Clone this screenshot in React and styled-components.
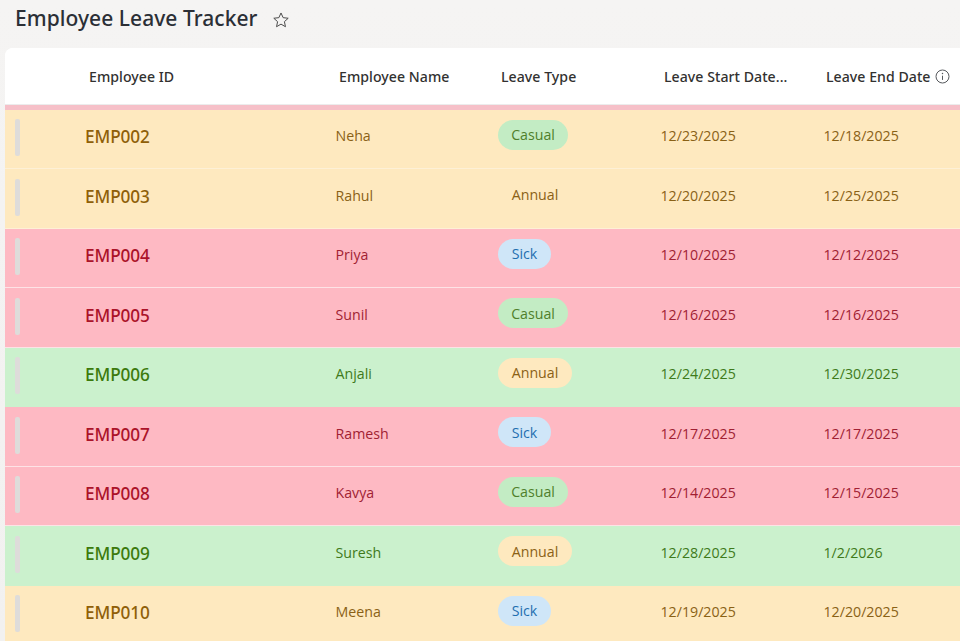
import React from "react";
import styled, { createGlobalStyle } from "styled-components";

const Global = createGlobalStyle`
  html, body { margin: 0; padding: 0; height: 641px; overflow: hidden; background: #f4f3f2; }
  * { box-sizing: border-box; }
  body { font-family: "Open Sans", "Noto Sans", "Liberation Sans", sans-serif; }
`;

const Page = styled.div`
  width: 960px;
  height: 641px;
  overflow: hidden;
  display: flex;
  flex-direction: column;
  background: linear-gradient(#f5f4f3, #f2f1f0);
`;

const TitleBar = styled.div`
  height: 48px;
  flex: none;
  padding: 0 0 12px 15px;
  display: flex;
  align-items: center;
  gap: 14px;
`;

const Title = styled.h1`
  margin: 0;
  font-family: "Noto Sans", "Open Sans", sans-serif;
  font-size: 21px;
  line-height: 28px;
  font-weight: 500;
  letter-spacing: 0.05px;
  color: #2b2f36;
`;

const StarIcon = styled.svg`
  margin-top: 4px;
`;

const Card = styled.div`
  margin-left: 5px;
  flex: 1;
  background: #fff;
  border-radius: 8px 0 0 0;
  overflow: hidden;
`;

const columns = "80px 251px 162px 163px 163px 1fr";

const HeaderRow = styled.div`
  display: grid;
  grid-template-columns: ${columns};
  height: 57px;
  align-items: center;
  background: #fff;
  border-bottom: 1px solid #ececec;
`;

const HeaderCell = styled.div`
  grid-column: ${(p) => p.$col};
  padding-left: ${(p) => p.$inset}px;
  display: flex;
  align-items: center;
  gap: 4px;
  font-family: "Noto Sans", "Open Sans", sans-serif;
  font-size: 14.1px;
  font-weight: 500;
  letter-spacing: 0.05px;
  color: #323130;
  white-space: nowrap;
`;

const Divider = styled.div`
  height: 4.5px;
  background: #f6c0c8;
`;

const palettes = {
  amber: { bg: "#fee9bf", fg: "#8a6116", strong: "#8f5f08", line: "#fdf0d6" },
  red: { bg: "#feb9c3", fg: "#a11f33", strong: "#ab1329", line: "#fde3e6" },
  green: { bg: "#cbf1cd", fg: "#3f7a1b", strong: "#3c7a0c", line: "#cbf1cd" },
};

const Row = styled.div`
  display: grid;
  grid-template-columns: ${columns};
  height: 59.5px;
  align-items: center;
  padding-bottom: 4px;
  background: ${(p) => palettes[p.$tone].bg};
  border-bottom: 1px solid ${(p) => palettes[p.$tone].line};
  color: ${(p) => palettes[p.$tone].fg};
`;

const Handle = styled.div`
  width: 5px;
  height: 37px;
  margin-left: 10px;
  margin-top: 2px;
  border-radius: 2px;
  background: #dedcda;
`;

const EmpId = styled.div`
  font-family: "Noto Sans", "Open Sans", sans-serif;
  font-size: 17.2px;
  font-weight: 500;
  letter-spacing: -0.1px;
  color: ${(p) => palettes[p.$tone].strong};
`;

const TextCell = styled.div`
  font-size: 14.2px;
  padding-bottom: 2px;
  margin-left: -0.5px;
  white-space: nowrap;
`;

const pills = {
  Casual: { bg: "#c3ecc4", fg: "#4f7f2b", w: 70 },
  Sick: { bg: "#cfe6f8", fg: "#1f6fb0", w: 53 },
  Annual: { bg: "#fee9bf", fg: "#8a6116", w: 74 },
};

const Pill = styled.span`
  display: inline-flex;
  align-items: center;
  justify-content: center;
  height: 30px;
  width: ${(p) => pills[p.$type].w}px;
  margin-bottom: 4px;
  border-radius: 15px;
  font-size: 14.2px;
  background: ${(p) => (p.$plain ? "transparent" : pills[p.$type].bg)};
  color: ${(p) => (p.$plain ? "inherit" : pills[p.$type].fg)};
`;

const Star = () => (
  <StarIcon width="18" height="18" viewBox="0 0 20 20" fill="none" stroke="#4a4a4a" strokeWidth="1.1" strokeLinejoin="round">
    <path d="M10 2.2l2.35 5.2 5.65.65-4.2 3.8 1.15 5.6L10 14.6l-4.95 2.85 1.15-5.6L2 8.05l5.65-.65z" />
  </StarIcon>
);

const Info = () => (
  <svg width="15" height="15" viewBox="0 0 15 15" fill="none" stroke="#55585c" strokeWidth="1">
    <circle cx="7.5" cy="7.5" r="6.5" />
    <path d="M7.5 6.7v4.2" />
    <circle cx="7.5" cy="4.6" r="0.75" fill="#55585c" stroke="none" />
  </svg>
);

const data = [
  ["amber", "EMP002", "Neha", "Casual", "12/23/2025", "12/18/2025"],
  ["amber", "EMP003", "Rahul", "Annual", "12/20/2025", "12/25/2025", true],
  ["red", "EMP004", "Priya", "Sick", "12/10/2025", "12/12/2025"],
  ["red", "EMP005", "Sunil", "Casual", "12/16/2025", "12/16/2025"],
  ["green", "EMP006", "Anjali", "Annual", "12/24/2025", "12/30/2025"],
  ["red", "EMP007", "Ramesh", "Sick", "12/17/2025", "12/17/2025"],
  ["red", "EMP008", "Kavya", "Casual", "12/14/2025", "12/15/2025"],
  ["green", "EMP009", "Suresh", "Annual", "12/28/2025", "1/2/2026"],
  ["amber", "EMP010", "Meena", "Sick", "12/19/2025", "12/20/2025"],
];

export default function App() {
  return (
    <Page>
      <Global />
      <TitleBar>
        <Title>Employee Leave Tracker</Title>
        <Star />
      </TitleBar>
      <Card>
        <HeaderRow>
          <HeaderCell $col={2} $inset={4}>Employee ID</HeaderCell>
          <HeaderCell $col={3} $inset={3}>Employee Name</HeaderCell>
          <HeaderCell $col={4} $inset={3}>Leave Type</HeaderCell>
          <HeaderCell $col={5} $inset={3}>Leave Start Date...</HeaderCell>
          <HeaderCell $col={6} $inset={2}>Leave End Date <Info /></HeaderCell>
        </HeaderRow>
        <Divider />
        {data.map(([tone, id, name, type, start, end, plain]) => (
          <Row key={id} $tone={tone}>
            <Handle />
            <EmpId $tone={tone}>{id}</EmpId>
            <TextCell>{name}</TextCell>
            <div><Pill $type={type} $plain={plain}>{type}</Pill></div>
            <TextCell>{start}</TextCell>
            <TextCell>{end}</TextCell>
          </Row>
        ))}
      </Card>
    </Page>
  );
}
